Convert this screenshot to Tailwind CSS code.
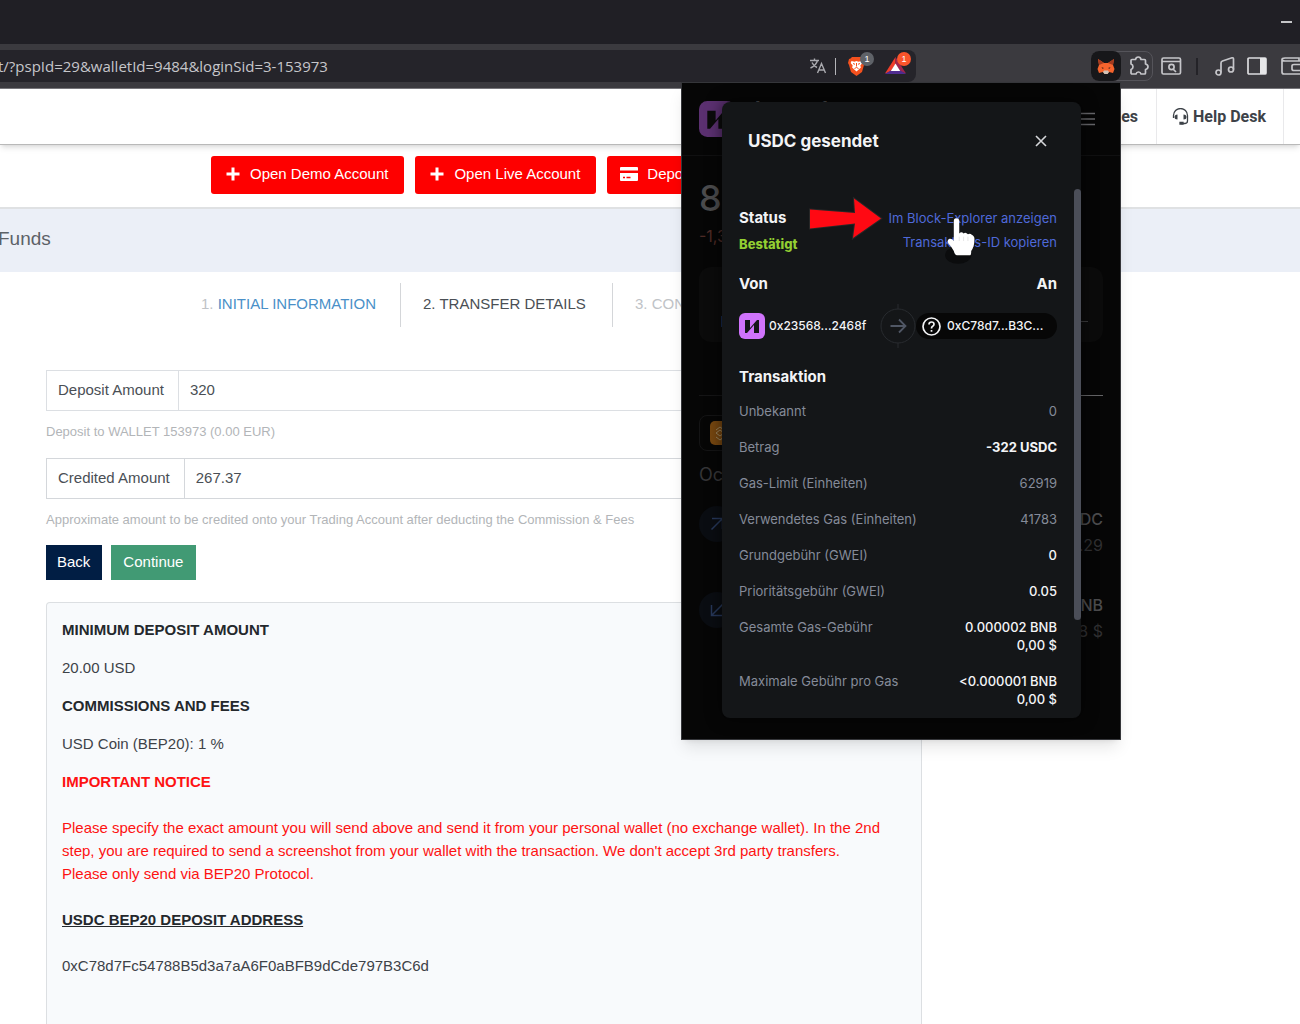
<!DOCTYPE html>
<html lang="de">
<head>
<meta charset="utf-8">
<meta name="viewport" content="width=device-width, initial-scale=1">
<title>Deposit Funds</title>
<script src="https://cdn.jsdelivr.net/npm/@tailwindcss/browser@4"></script>
</head>
<body class="relative flex h-screen flex-col overflow-hidden bg-white font-['Liberation_Sans',sans-serif] text-[15px] leading-[23px] text-[#4a4f55]">

<!-- Browser tab strip -->
<div class="flex h-11 shrink-0 items-center justify-end bg-[#201f25] pr-2">
  <button aria-label="Minimieren" class="h-0.5 w-[11px] bg-[#c5c5c8]"></button>
</div>

<!-- Browser toolbar -->
<div class="flex h-[45px] shrink-0 items-center border-b border-[#77767b] bg-[#3b3a3f]">
  <div class="mr-[175px] flex h-8 grow items-center rounded-r-lg bg-[#25242a] pr-0.5">
    <input aria-label="Adresse" value="t/?pspId=29&amp;walletId=9484&amp;loginSid=3-153973" class="-ml-0.5 w-0 grow bg-transparent font-['Open_Sans',sans-serif] text-[15px] text-[#c6c6ca] outline-none">
    <svg class="mr-2 h-[18px] w-[18px]" viewBox="0 0 18 18" fill="none" stroke="#a9a9ae" stroke-width="1.4"><path d="M1 3.500h9M5.500 1.500v2M8.500 3.500C7.500 7 5 9.500 1.500 11M3 5.500c1 2.500 3 4 5 5M8.500 16l4-9.500 4 9.500M10 13h5"/></svg>
    <span class="mr-3 h-[17px] w-px bg-[#b5b5b9]"></span>
    <span class="relative mr-3 h-5 w-[25px]">
      <svg class="h-5 w-[17px]" viewBox="0 0 17 20"><path d="M4 1h9l1.500 1.500L16 3l1 4-1 2-2 7-5.500 4L3 16 1 9 0 7l1-4 1.500-.5z" fill="#f4511e"/><path d="M3.500 5l3 .7L8.500 5l2 .7 3-.7.8 2-2 2.500.6 2-4.400 4-4.400-4 .6-2-2-2.500z" fill="#fff"/><path d="M5 7.500l2 .8M12 7.500l-2 .8M8.500 7v3.500M6.500 12.500l2-1 2 1" stroke="#f4511e" fill="none"/></svg>
      <span class="absolute -top-1 left-3 flex size-3.5 items-center justify-center rounded-full bg-[#5f6268] text-[9px] leading-none text-white">1</span>
    </span>
    <span class="relative h-5 w-[29px]">
      <svg class="h-[19px] w-[21px]" viewBox="0 0 21 19"><path d="M10.500 1L0 17.500l5.500-1.800L10.500 8z" fill="#ef3e2a"/><path d="M10.500 1L21 17.500l-5.500-1.800L10.500 8z" fill="#a3264d"/><path d="M0 18l5.500-3.500h10L21 18z" fill="#4f2c8f"/><path d="M10.500 7.500l4.700 7.500H5.800z" fill="#fff"/></svg>
      <span class="absolute -top-1 left-3 flex size-3.5 items-center justify-center rounded-full bg-[#fb542b] text-[9px] leading-none text-white">1</span>
    </span>
  </div>
  <div class="flex shrink-0 items-center">
    <div class="mr-2 flex h-[30px] w-[62px] items-center rounded-lg border border-[#55545a]">
      <button aria-label="MetaMask" class="-ml-px flex h-[30px] w-[30px] items-center justify-center rounded-lg bg-[#17171a]">
        <svg class="h-[17px] w-[18px]" viewBox="0 0 18 17"><path d="M1 1l6 4h4l6-4-1 6 1.500 4-1.500 4-4-1-1.500 2h-3L6 14l-4 1-1.500-4L2 7z" fill="#f6642d"/><path d="M1 1l6 4-5 2zM17 1l-6 4 5 2z" fill="#a33a1f"/><path d="M6 14l1.500 2h3L12 14l-1-1.500H7z" fill="#cfc3b8"/><path d="M4.500 9l2.500 1-1.500 1zM13.500 9L11 10l1.500 1z" fill="#5b2a1c"/></svg>
      </button>
      <button aria-label="Erweiterungen" class="ml-2">
        <svg class="size-5" viewBox="0 0 20 20" fill="none" stroke="#c6c6ca" stroke-width="1.700" stroke-linejoin="round"><path d="M3 3.500h3.500q.5-2.500 2.800-2.500T12 3.500h3.500q1 0 1 1V8q2.500.5 2.500 2.700t-2.500 2.800V17q0 1-1 1H12q-.5-2-2.500-2T7 18H3q-1 0-1-1v-3.500q2-.5 2-2.700T2 8V4.500q0-1 1-1z"/></svg>
      </button>
    </div>
    <svg class="mr-[14px] h-[18px] w-[21px]" viewBox="0 0 21 18" fill="none" stroke="#c6c6ca" stroke-width="1.700"><rect x="1" y="1" width="18.500" height="16" rx="1.500"/><path d="M1 4.500h18.500M12 12l3 3"/><circle cx="10.500" cy="10" r="2.600"/></svg>
    <span class="mr-[17px] h-[17px] w-0.5 bg-[#242328]"></span>
    <svg class="mr-3 h-5 w-5" viewBox="0 0 20 20" fill="none" stroke="#c6c6ca" stroke-width="1.700"><circle cx="3.500" cy="16.500" r="2.500"/><circle cx="16" cy="13.500" r="2.500"/><path d="M6 16.500V7q0-1.500 1.500-2L17 1.800q1.500-.3 1.500 1.200v10.500"/></svg>
    <svg class="mr-[14px] h-[18px] w-5" viewBox="0 0 20 18" fill="none" stroke="#dcdcdf" stroke-width="1.700"><rect x="1" y="1" width="18" height="16" rx="1"/><path d="M13 1h6v16h-6z" fill="#e6e6e8" stroke="none"/></svg>
    <svg class="h-[18px] w-[19px]" viewBox="0 0 19 18" fill="none" stroke="#c6c6ca" stroke-width="1.700"><path d="M20 4H4Q1 4 1 2.500 1 1 4 1h14v3M1 2.500V15q0 2 2 2h17M20 7.500h-7q-2 0-2 1.500v3q0 1.500 2 1.500h7"/></svg>
  </div>
</div>

<!-- Site header -->
<header class="relative z-10 flex h-14 shrink-0 justify-end border-b border-[#b9b9b9] bg-white text-[#3d4248] shadow-md">
  <nav class="flex font-['Roboto',sans-serif] text-[16px] font-bold">
    <a href="#" class="flex items-center pr-[18px]">es</a>
    <a href="#" class="flex items-center gap-1 border-x border-[#e9e9eb] pr-[17px] pl-[15px]">
      <svg class="h-[17px] w-[17px]" viewBox="0 0 17 17" fill="none" stroke="#3d4248" stroke-width="1.300"><path d="M1.500 10V7.500a7 7 0 0 1 14 0V13q0 2.500-3 2.500H9"/><path d="M5.500 6.500v5q-3 0-3-2.500t3-2.500zM11.500 6.500v5q3 0 3-2.500t-3-2.500z" fill="#3d4248" stroke="none"/><path d="M8 14.500h3v1.500H8z" fill="#3d4248"/></svg>
      Help Desk
    </a>
    <span class="w-4"></span>
  </nav>
</header>

<!-- Quick actions -->
<div class="flex h-16 shrink-0 gap-[11px] border-b-2 border-[#dfe1e3] pt-[11px] pl-[211px] text-white">
  <button class="flex h-[38px] items-center gap-[9px] rounded-[3px] bg-[#fe0000] pr-4 pb-[3px] pl-[14px]">
    <svg class="size-4" viewBox="0 0 16 16" stroke="#fff" stroke-width="3" fill="none"><path d="M8 1.500v13M1.500 8h13"/></svg>
    <span>Open Demo Account</span>
  </button>
  <button class="flex h-[38px] items-center gap-[9px] rounded-[3px] bg-[#fe0000] pr-4 pb-[3px] pl-[14px]">
    <svg class="size-4" viewBox="0 0 16 16" stroke="#fff" stroke-width="3" fill="none"><path d="M8 1.500v13M1.500 8h13"/></svg>
    <span>Open Live Account</span>
  </button>
  <button class="flex h-[38px] w-[120px] items-center gap-[9px] rounded-[3px] bg-[#fe0000] pb-[3px] pl-[13px]">
    <svg class="h-[14px] w-[18px]" viewBox="0 0 18 14"><path d="M0 1q0-1 1-1h16q1 0 1 1v2.500H0zM0 6h18v7q0 1-1 1H1q-1 0-1-1z" fill="#fff"/><path d="M3 10.500h2M6.500 10.500h4" stroke="#fe0000" stroke-width="1.500"/></svg>
    <span>Depo</span>
  </button>
</div>

<!-- Page title -->
<div class="flex h-[63px] shrink-0 items-center bg-[#ebeff7] pb-1">
  <h1 class="-ml-0.5 text-[19px] text-[#5c6167]">Funds</h1>
</div>

<main class="mr-[378px] ml-[46px] flex min-h-0 grow flex-col">
  <ol class="mt-[11px] flex h-11 shrink-0 items-center pl-[133px] text-[#c0c3c7]">
    <li class="flex h-full w-[222px] shrink-0 items-center border-r border-[#d4d6d9] pb-[3px] pl-[22px]">1.&nbsp;<a href="#" class="text-[#4a90c8]">INITIAL INFORMATION</a></li>
    <li class="flex h-full w-[212px] shrink-0 items-center border-r border-[#d4d6d9] pb-[3px] pl-[22px] text-[#4a4f55]">2. TRANSFER DETAILS</li>
    <li class="pb-[3px] pl-[22px]">3. CON</li>
  </ol>

  <form class="mt-[43px] shrink-0">
    <div class="flex h-[41px] border border-[#dcdfe3]">
      <label for="deposit" class="flex items-center border-r border-[#dcdfe3] pr-[14px] pb-0.5 pl-[11px]">Deposit Amount</label>
      <input id="deposit" value="320" class="w-0 grow px-[11px] pb-0.5 outline-none">
    </div>
    <p class="mt-[9px] text-[13px] text-[#b2b5b8]">Deposit to WALLET 153973 (0.00 EUR)</p>
    <div class="mt-[15px] flex h-[41px] border border-[#d4d7db]">
      <label for="credited" class="flex items-center border-r border-[#d4d7db] pr-[14px] pb-0.5 pl-[11px]">Credited Amount</label>
      <input id="credited" value="267.37" class="w-0 grow px-[11px] pb-0.5 outline-none">
    </div>
    <p class="mt-[9px] text-[13px] text-[#b2b5b8]">Approximate amount to be credited onto your Trading Account after deducting the Commission &amp; Fees</p>
    <div class="mt-[14px] flex gap-[9px] text-white">
      <button type="button" class="h-[35px] bg-[#011e44] pr-3 pb-0.5 pl-[11px]">Back</button>
      <button type="button" class="h-[35px] bg-[#419a74] pr-[13px] pb-0.5 pl-3">Continue</button>
    </div>
  </form>

  <section class="mt-[22px] flex grow flex-col gap-[15px] rounded-t border border-b-0 border-[#dcdfe2] bg-[#f8fafc] px-[15px] pt-[15px] text-[#3d4248]">
    <h2 class="font-bold text-[#24282c]">MINIMUM DEPOSIT AMOUNT</h2>
    <p>20.00 USD</p>
    <h2 class="font-bold text-[#24282c]">COMMISSIONS AND FEES</h2>
    <p>USD Coin (BEP20): 1 %</p>
    <h2 class="font-bold text-[#fe1212]">IMPORTANT NOTICE</h2>
    <p class="mt-2 text-[#fe1212]">Please specify the exact amount you will send above and send it from your personal wallet (no exchange wallet). In the 2nd<br>step, you are required to send a screenshot from your wallet with the transaction. We don't accept 3rd party transfers.<br>Please only send via BEP20 Protocol.</p>
    <h2 class="mt-2 font-bold text-[#24282c] underline">USDC BEP20 DEPOSIT ADDRESS</h2>
    <p class="mt-2">0xC78d7Fc54788B5d3a7aA6F0aBFB9dCde797B3C6d</p>
  </section>
</main>

<!-- Wallet extension popup -->
<aside class="absolute top-[82px] right-[179px] z-20 h-[658px] w-[440px] border border-[#35363a] bg-[#060606] font-['Inter',sans-serif] leading-[18px] shadow-lg">
  <!-- Dimmed wallet home screen -->
  <div class="flex h-full flex-col text-[#4b4b4d]">
    <div class="flex h-[73px] items-center justify-between border-b border-[#101011] px-[17px]">
      <svg class="h-9 w-9" viewBox="0 0 26 26"><rect width="26" height="26" rx="6" fill="#5b3070"/><path d="M6 7h6v7l6-7h2v13h-6v-7l-6 7H6z" fill="#0b0b0b"/></svg>
      <span class="mb-6 ml-[17px] grow text-[16px] font-semibold">Account 1</span>
      <button aria-label="Menü"><svg class="mr-2 h-[14px] w-4" viewBox="0 0 16 14" stroke="#66666a" stroke-width="1.500"><path d="M0 1.500h16M0 7h16M0 12.500h16"/></svg></button>
    </div>
    <div class="px-[17px]">
      <p class="mt-[22px] text-[36px] leading-10 font-medium">87</p>
      <p class="mt-[9px] text-[16px] text-[#4d2a25]">-1,3</p>
      <div class="mt-[22px] flex h-[75px] items-center justify-between rounded-xl bg-[#0b0b0b] pt-[34px] pr-[15px] pl-[22px]">
        <span class="h-[11px] w-0.5 bg-[#16274c]"></span><span class="h-px w-2 bg-[#3a3a3c]"></span>
      </div>
      <div class="mt-[53px] flex h-px justify-end bg-[#151516]"><span class="w-[60px] bg-[#636365]"></span></div>
      <div class="mt-[19px] flex h-9 w-20 items-center rounded-lg border border-[#141415] pl-[10px]">
        <svg class="size-6" viewBox="0 0 24 24"><rect width="24" height="24" rx="5" fill="#774710"/><path d="M6 9l4-3 4 3M6 12l4-3 4 3-4 3zM6 16l4 3 4-3" stroke="#9b855f" fill="none"/></svg>
      </div>
      <p class="mt-[15px] text-[18px] text-[#353537]">Oc</p>
      <div class="mt-[22px] flex h-[36px] items-center justify-between">
        <span class="flex size-9 items-center justify-center rounded-full bg-[#0a0d12]"><svg class="size-3.5" viewBox="0 0 14 14" stroke="#263759" stroke-width="1.500" fill="none"><path d="M1.500 12.500l11-11M2 1.500h10.500V12"/></svg></span>
        <p class="pt-4 text-right text-[16px] leading-[26px] font-medium">DC<br><span class="font-normal text-[#2f2f31]">.29</span></p>
      </div>
      <div class="mt-[50px] flex h-[36px] items-center justify-between">
        <span class="flex size-9 items-center justify-center rounded-full bg-[#0a0d12]"><svg class="size-3.5" viewBox="0 0 14 14" stroke="#263759" stroke-width="1.500" fill="none"><path d="M12.500 1.500l-11 11M1.500 2v10.500H12"/></svg></span>
        <p class="pt-4 text-right text-[16px] leading-[26px] font-medium">NB<br><span class="font-normal text-[#2f2f31]">8 $</span></p>
      </div>
    </div>
  </div>

  <!-- Transaction details dialog -->
  <div role="dialog" aria-labelledby="dlg-title" class="absolute top-[19px] left-10 h-[616px] w-[359px] overflow-hidden rounded-lg bg-[#141618] text-[13px] text-[#f3f4f6] shadow-[0_0_16px_rgba(0,0,0,0.6)]">
    <div class="flex items-center justify-between pt-[27px] pr-[34px] pl-[26px]">
      <h2 id="dlg-title" class="text-[17px] leading-6 font-bold">USDC gesendet</h2>
      <button aria-label="Schließen"><svg class="size-3" viewBox="0 0 12 12" stroke="#d6d7da" stroke-width="1.600"><path d="M1 1l10 10M11 1L1 11"/></svg></button>
    </div>
    <div class="absolute top-[87px] right-0 h-[431px] w-[7px] rounded bg-[#4b4e58]"></div>

    <div class="mt-14 pr-6 pl-[17px]">
      <div class="flex justify-between">
        <div>
          <p class="text-[15px] font-bold">Status</p>
          <p class="mt-2 font-extrabold text-[#93cf32]">Bestätigt</p>
        </div>
        <div class="flex flex-col items-end gap-[6px] text-[#4f69d8]">
          <a href="#">Im Block-Explorer anzeigen</a>
          <a href="#">Transaktions-ID kopieren</a>
        </div>
      </div>
      <div class="mt-[22px] flex justify-between text-[15px] font-bold"><span>Von</span><span>An</span></div>
      <div class="mt-[11px] flex h-11 items-center text-[12px] font-medium">
        <svg class="size-[26px]" viewBox="0 0 26 26"><rect width="26" height="26" rx="6" fill="#cf73fb"/><path d="M6 7h5v8l7-8h2v13h-5v-8l-7 8H6z" fill="#141618"/></svg>
        <span class="ml-1 grow">0x23568...2468f</span>
        <svg class="h-11 w-[36px]" viewBox="0 0 36 44" fill="none" stroke="#282b2f"><circle cx="18" cy="22" r="17"/><path d="M18 0v5M18 39v5"/><path d="M10.500 22h15M19 15.500l6.500 6.500-6.500 6.500" stroke="#505765" stroke-width="1.800"/></svg>
        <span class="flex h-[26px] w-[141px] items-center gap-1.5 rounded-full bg-[#070707] pl-[6px]">
          <svg class="size-[19px]" viewBox="0 0 19 19" fill="none" stroke="#f3f4f6" stroke-width="1.700"><circle cx="9.500" cy="9.500" r="8.500"/><path d="M7 7.500q0-2.500 2.500-2.500T12 7.300q0 1.200-1.300 2T9.500 11.500M9.500 13v1.700"/></svg>
          0xC78d7...B3C...
        </span>
      </div>
      <h3 class="mt-5 text-[15px] font-bold">Transaktion</h3>
      <dl class="mt-4 flex flex-col gap-[18px] text-[#858b99]">
        <div class="flex justify-between"><dt>Unbekannt</dt><dd>0</dd></div>
        <div class="flex justify-between"><dt>Betrag</dt><dd class="font-bold text-[#f3f4f6]">-322 USDC</dd></div>
        <div class="flex justify-between"><dt>Gas-Limit (Einheiten)</dt><dd>62919</dd></div>
        <div class="flex justify-between"><dt>Verwendetes Gas (Einheiten)</dt><dd>41783</dd></div>
        <div class="flex justify-between"><dt>Grundgebühr (GWEI)</dt><dd class="font-medium text-[#f3f4f6]">0</dd></div>
        <div class="flex justify-between"><dt>Prioritätsgebühr (GWEI)</dt><dd class="font-medium text-[#f3f4f6]">0.05</dd></div>
        <div class="flex justify-between"><dt>Gesamte Gas-Gebühr</dt><dd class="text-right font-medium text-[#f3f4f6]">0.000002 BNB<br>0,00 $</dd></div>
        <div class="flex justify-between"><dt>Maximale Gebühr pro Gas</dt><dd class="text-right font-medium text-[#f3f4f6]">&lt;0.000001 BNB<br>0,00 $</dd></div>
      </dl>
    </div>
  </div>

  <!-- Pointer arrow and mouse cursor -->
  <svg class="absolute top-[113px] left-[125px] h-[46px] w-[80px]" viewBox="0 0 80 46"><path d="M3 13.500l45 3.500-1-14.500L74 22.500 46 42l2-14.500-45 5z" fill="#ff0913" stroke="#272727" stroke-width="2" paint-order="stroke"/></svg>
  <svg class="absolute top-[133px] left-[262px] h-[50px] w-[37px]" viewBox="0 0 34 46"><ellipse cx="13" cy="36" rx="12" ry="8" fill="#0b0c0d"/><path d="M11 2q3 0 3 3v11q2-2 4 0 2-1.500 4 .8 2-1 3.500.4 2.500 1 2.500 4 0 7-3 11 0 4-1 4H12q-2 0-3-4-2-4-5-7-1.500-3 1-4.200 2-.5 4 2V5q0-3 2-3z" fill="#fff"/><path d="M14 19v4M18 19v4M22 19v4" stroke="#d9d9d9" stroke-width=".6"/></svg>
</aside>
</body>
</html>
